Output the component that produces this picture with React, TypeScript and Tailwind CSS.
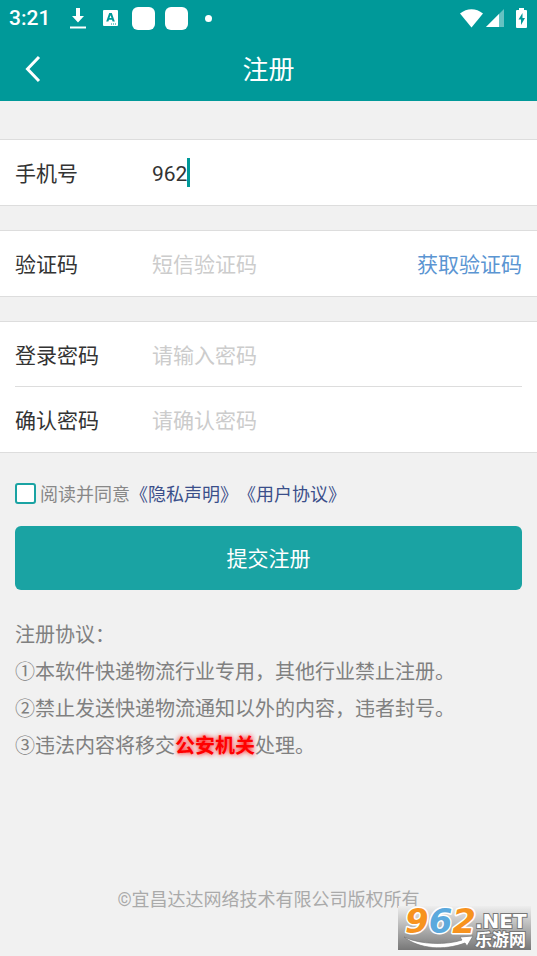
import { useState } from "react";

const passwordRows = [
  { id: "password", label: "登录密码", placeholder: "请输入密码" },
  { id: "confirm", label: "确认密码", placeholder: "请确认密码" },
];

const labelClass = "w-[137px] shrink-0 pt-1 text-[21px] text-[#333333]";
const inputClass =
  "min-w-0 flex-1 bg-transparent pt-1 text-[21px] text-[#333333] outline-none placeholder:text-[#cccccc]";

function StatusBar() {
  return (
    <div className="flex h-9 items-center justify-between pl-[9px] pr-[10px] text-white">
      <div className="flex items-center">
        <span className="w-[61px] pt-[2px] text-[21px] font-medium">3:21</span>
        <svg className="mr-[17px]" width="16" height="22" viewBox="0 0 16 22" fill="currentColor">
          <path d="M6 1h4v8h4l-6 6.500-6-6.500h4zM0 19.500h16v2H0z" />
        </svg>
        <svg className="mr-[14px]" width="15" height="16" viewBox="0 0 15 16">
          <rect width="15" height="16" rx="1" fill="currentColor" />
          <path
            fillRule="evenodd"
            d="M6.200 3h2.600l3 8.500H9.600l-.6-1.800H6l-.6 1.800H3.200zM7.500 5.200 6.500 8h2z"
            fill="#009999"
          />
          <path d="M8 14h6" stroke="#009999" strokeDasharray="1 1" />
        </svg>
        <span className="mr-[10px] size-[23px] rounded-[6px] bg-white" />
        <span className="mr-[17px] size-[23px] rounded-[6px] bg-white" />
        <span className="size-[7px] rounded-full bg-white" />
      </div>
      <div className="flex items-center">
        <svg className="mr-[3px]" width="23" height="19" viewBox="0 0 23 19" fill="currentColor">
          <path d="M0 4.500C7-1.200 16-1.200 23 4.500L11.500 18.500z" />
        </svg>
        <svg className="mr-3" width="18" height="18" viewBox="0 0 18 18" fill="currentColor">
          <path d="M18 0v18H0z" opacity=".4" />
          <path d="M13 5v13H0z" />
        </svg>
        <svg width="11" height="20" viewBox="0 0 11 20">
          <path d="M3 0h5v2h2q1 0 1 1v16q0 1-1 1H1q-1 0-1-1V3q0-1 1-1h2z" fill="currentColor" />
          <path d="M6.500 5 2.500 11.500h2.500V17l4-7H6.500z" fill="#009999" />
        </svg>
      </div>
    </div>
  );
}

function SiteBadge() {
  return (
    <svg className="absolute bottom-[6px] right-[6px] overflow-visible" width="133" height="44" viewBox="0 0 133 44">
      <defs>
        <linearGradient id="badge" x1="0" y1="0" x2="0" y2="1">
          <stop offset="0" stopColor="#eeeeee" />
          <stop offset="1" stopColor="#777777" />
        </linearGradient>
      </defs>
      <rect width="133" height="44" fill="url(#badge)" />
      <path
        d="M6 31c17 8 43 8 58 3l-2-3 13-1-6 10-2-3c-21 8-46 6-61-6z"
        fill="#ffffff"
        stroke="#777777"
        strokeWidth=".7"
      />
      <text
        x="7"
        y="27"
        fontSize="34"
        stroke="#ffffff"
        strokeWidth="3"
        paintOrder="stroke"
        strokeLinejoin="round"
        className="font-['DejaVu_Sans',sans-serif] font-bold italic"
      >
        <tspan fill="#f7931e">9</tspan>
        <tspan fill="#5ba9dd">6</tspan>
        <tspan fill="#f7931e">2</tspan>
      </text>
      <g fill="#ffffff" stroke="#777777" strokeWidth="2" paintOrder="stroke">
        <text x="77" y="22" fontSize="20" className="font-['DejaVu_Sans',sans-serif] font-bold">.NET</text>
        <text x="77" y="40" fontSize="17" className="font-['Noto_Sans_CJK_SC',sans-serif] font-bold">乐游网</text>
      </g>
    </svg>
  );
}

export default function App() {
  const [phone, setPhone] = useState("962");

  return (
    <div className="relative flex min-h-screen flex-col bg-[#f1f1f1] font-[Roboto,'Noto_Sans_CJK_SC',sans-serif]">
      <header className="bg-[#009999] text-white">
        <StatusBar />
        <div className="grid h-[65px] grid-cols-[64px_1fr_64px] items-center">
          <button type="button" aria-label="返回" className="flex h-full items-center pl-[25px]">
            <svg width="16" height="28" viewBox="0 0 16 28" fill="none" stroke="currentColor" strokeWidth="3">
              <path d="M14 2 2.500 14 14 26" />
            </svg>
          </button>
          <h1 className="pt-1 text-center text-[26px]">注册</h1>
        </div>
      </header>

      <form className="mt-[38px]" onSubmit={(e) => e.preventDefault()}>
        <div className="mb-6 flex h-[67px] items-center border-y border-[#dddddd] bg-white px-[15px]">
          <label htmlFor="phone" className={labelClass}>手机号</label>
          <input
            id="phone"
            type="tel"
            value={phone}
            onChange={(e) => setPhone(e.target.value)}
            className="field-sizing-content pt-1 text-[21px] text-[#333333] caret-transparent outline-none"
          />
          <span className="h-[29px] w-[3px] bg-[#009999]" />
        </div>

        <div className="mb-6 flex h-[67px] items-center border-y border-[#dddddd] bg-white px-[15px]">
          <label htmlFor="code" className={labelClass}>验证码</label>
          <input id="code" placeholder="短信验证码" className={inputClass} />
          <button type="button" className="shrink-0 pt-1 text-[21px] text-[#5b95d2]">获取验证码</button>
        </div>

        <div className="divide-y divide-[#dddddd] border-y border-[#dddddd] bg-white px-[15px]">
          {passwordRows.map((row) => (
            <div key={row.id} className="flex h-[65px] items-center pt-px">
              <label htmlFor={row.id} className={labelClass}>{row.label}</label>
              <input id={row.id} type="password" placeholder={row.placeholder} className={inputClass} />
            </div>
          ))}
        </div>

        <div className="mx-[15px]">
          <div className="mt-7 flex h-6 items-center text-lg leading-6 text-[#888888]">
            <input
              id="agree"
              type="checkbox"
              className="mr-1 size-[21px] appearance-none rounded-[3px] border-2 border-[#1aa3a3] bg-white checked:bg-[#1aa3a3]"
            />
            <label htmlFor="agree" className="pt-1">阅读并同意</label>
            <a href="#privacy" className="pt-1 text-[#3b4f8a]">《隐私声明》</a>
            <a href="#terms" className="pt-1 text-[#3b4f8a]">《用户协议》</a>
          </div>
          <button type="submit" className="mt-[21px] h-16 w-full rounded-[6px] bg-[#1aa3a3] pt-1 text-[21px] text-white">
            提交注册
          </button>
        </div>
      </form>

      <section className="mx-[15px] mt-[27px] text-xl leading-[37px] text-[#808080]">
        <h2>注册协议：</h2>
        <p>①本软件快递物流行业专用，其他行业禁止注册。</p>
        <p>②禁止发送快递物流通知以外的内容，违者封号。</p>
        <p>
          ③违法内容将移交
          <b className="text-[#ff0000] [text-shadow:0_0_5px_#ff0000]">公安机关</b>
          处理。
        </p>
      </section>

      <footer className="mt-auto pb-11 text-center text-lg leading-6 text-[#aaaaaa]">
        ©宜昌达达网络技术有限公司版权所有
      </footer>
      <SiteBadge />
    </div>
  );
}
